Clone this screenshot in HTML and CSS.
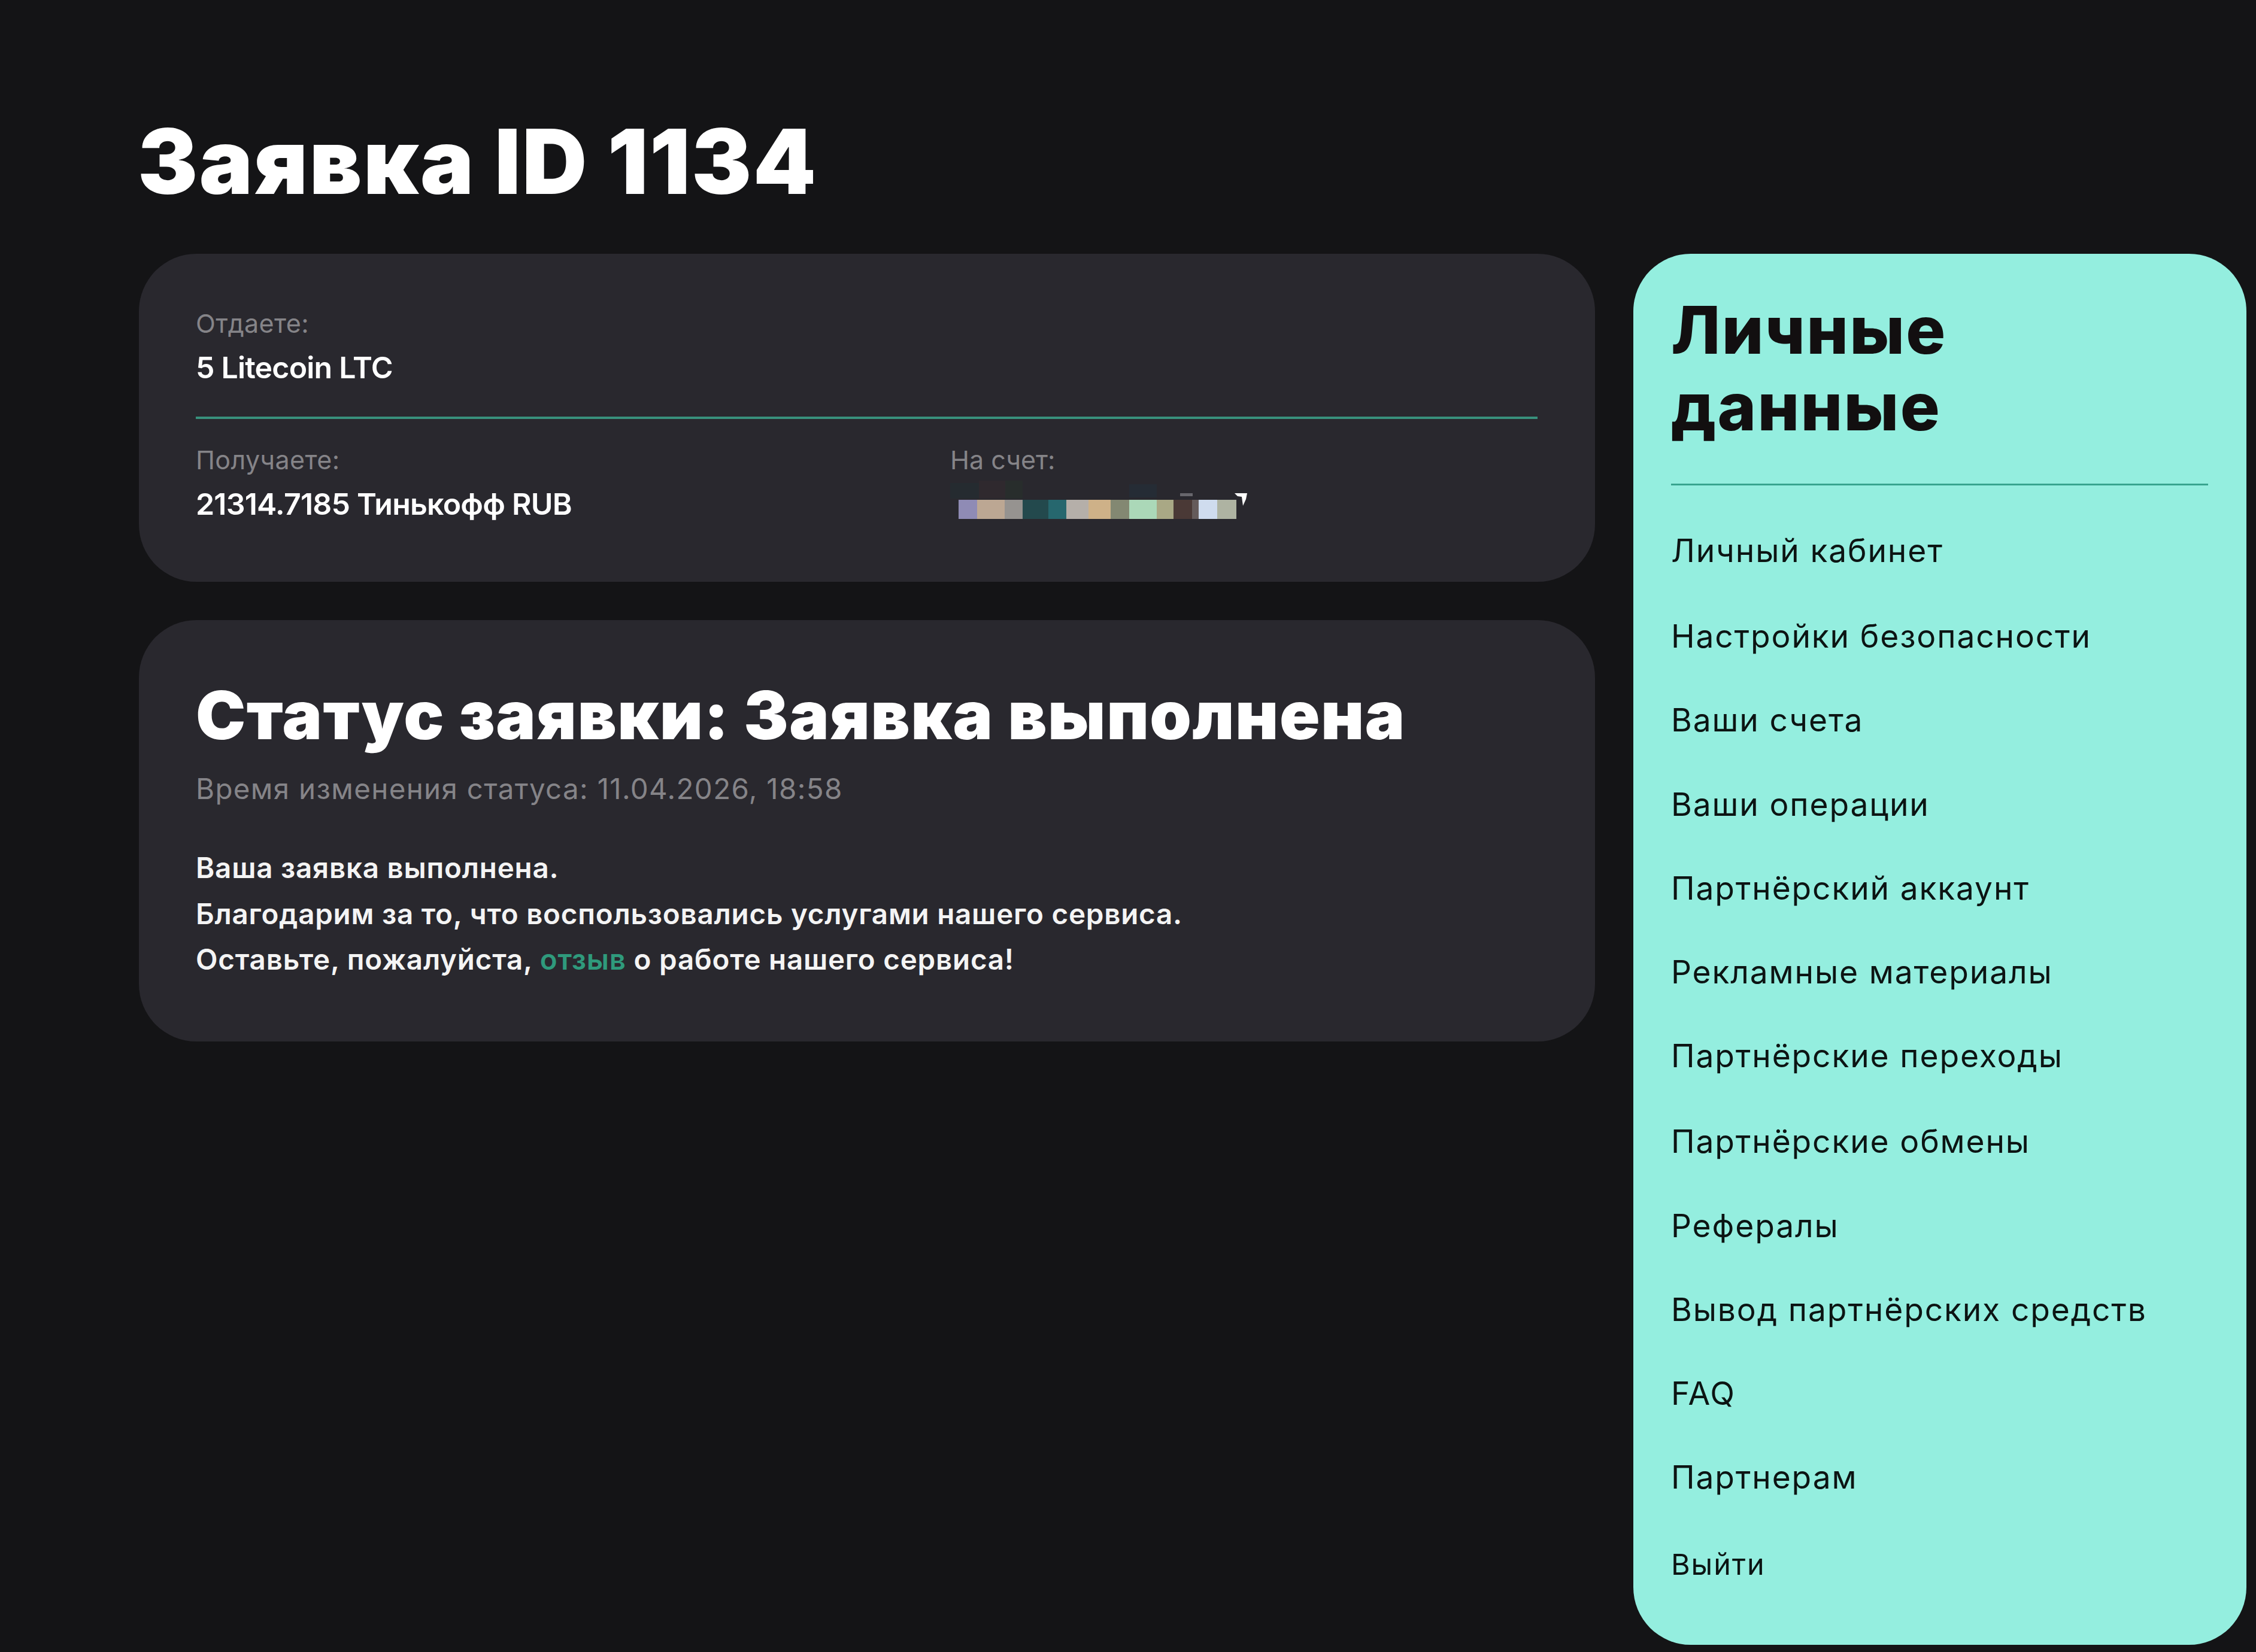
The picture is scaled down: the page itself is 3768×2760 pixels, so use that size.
FILE: index.html
```html
<!DOCTYPE html>
<html lang="ru">
<head>
    <meta charset="UTF-8">
    <meta name="viewport" content="width=device-width, initial-scale=1.0">
    <title>Заявка ID 1134</title>
    <link rel="stylesheet" href="styles.css">
</head>
<body>
    <div class="page">
        <h1 class="page-title">Заявка ID 1134</h1>
        <div class="layout">
            <div class="content">
                <!-- Exchange details -->
                <div class="card exchange">
                    <div class="exchange-row">
                        <div class="exchange-col">
                            <div class="label">Отдаете:</div>
                            <div class="value">5 Litecoin LTC</div>
                        </div>
                    </div>
                    <div class="exchange-row">
                        <div class="exchange-col">
                            <div class="label">Получаете:</div>
                            <div class="value">21314.7185 Тинькофф RUB</div>
                        </div>
                        <div class="exchange-col">
                            <div class="label account-label">На счет:</div>
                            <!-- Hidden account number -->
                            <svg class="account-mask" width="504" height="76" viewBox="0 0 504 76">
                                <rect x="0" y="4" width="48" height="26" fill="#252b30"/>
                                <rect x="48" y="0" width="44" height="30" fill="#2f292e"/>
                                <rect x="92" y="0" width="29" height="30" fill="#282d2c"/>
                                <rect x="299" y="6" width="46" height="22" fill="#252c35"/>
                                <rect x="14" y="32" width="31" height="32" fill="#8f8bb5"/>
                                <rect x="45" y="32" width="46" height="32" fill="#bca793"/>
                                <rect x="91" y="32" width="30" height="32" fill="#969390"/>
                                <rect x="121" y="32" width="43" height="32" fill="#23494d"/>
                                <rect x="164" y="32" width="30" height="32" fill="#26676e"/>
                                <rect x="194" y="32" width="37" height="32" fill="#b5afa9"/>
                                <rect x="231" y="32" width="37" height="32" fill="#ceb188"/>
                                <rect x="268" y="32" width="31" height="32" fill="#838872"/>
                                <rect x="299" y="32" width="46" height="32" fill="#abd8b8"/>
                                <rect x="345" y="32" width="28" height="32" fill="#a9a885"/>
                                <rect x="373" y="32" width="31" height="32" fill="#4a3936"/>
                                <rect x="404" y="32" width="11" height="32" fill="#655b5b"/>
                                <rect x="415" y="32" width="31" height="32" fill="#cfdcee"/>
                                <rect x="446" y="32" width="32" height="32" fill="#aeb3a2"/>
                                <rect x="384" y="21" width="21" height="5" fill="#67666c"/>
                                <polygon points="475,21 496,21 494,31 489,42 487,27 480,26" fill="#fff"/>
                            </svg>
                        </div>
                    </div>
                </div>

                <!-- Status -->
                <div class="card status">
                    <h2 class="status-title">Статус заявки: Заявка выполнена</h2>
                    <div class="status-time">Время изменения статуса: 11.04.2026, 18:58</div>
                    <div class="status-text">
                        Ваша заявка выполнена.<br>
                        Благодарим за то, что воспользовались услугами нашего сервиса.<br>
                        Оставьте, пожалуйста, <a href="#">отзыв</a> о работе нашего сервиса!
                    </div>
                </div>
            </div>

            <div class="sidebar">
                <div class="sidebar-title">Личные<br>данные</div>
                <ul class="menu">
                    <li><a href="#">Личный кабинет</a></li>
                    <li><a href="#">Настройки безопасности</a></li>
                    <li><a href="#">Ваши счета</a></li>
                    <li><a href="#">Ваши операции</a></li>
                    <li><a href="#">Партнёрский аккаунт</a></li>
                    <li><a href="#">Рекламные материалы</a></li>
                    <li><a href="#">Партнёрские переходы</a></li>
                    <li><a href="#">Партнёрские обмены</a></li>
                    <li><a href="#">Рефералы</a></li>
                    <li><a href="#">Вывод партнёрских средств</a></li>
                    <li><a href="#">FAQ</a></li>
                    <li><a href="#">Партнерам</a></li>
                    <li class="logout"><a href="#">Выйти</a></li>
                </ul>
            </div>
        </div>
    </div>
</body>
</html>
```
FILE: styles.css
```css
* {
    box-sizing: border-box;
}

body {
    margin: 0;
    background-color: #141416;
    font-family: Inter, Roboto, sans-serif;
    color: #fff;
    overflow: hidden;
}

a {
    color: inherit;
    text-decoration: none;
}

.page {
    padding: 190px 16px 12px 232px;
}

.page-title {
    margin: 0 0 74px -2px;
    font-size: 150px;
    line-height: 160px;
    font-weight: 900;
    letter-spacing: 0.0155em;
}

.layout {
    display: flex;
    gap: 64px;
}

.content {
    width: 2432px;
}

.card {
    background-color: #29282e;
    border-radius: 96px;
    margin-bottom: 64px;
}

/* Exchange */
.exchange {
    height: 548px;
    padding: 84px 96px 0 95px;
}

.exchange-row {
    display: grid;
    grid-template-columns: 1260px 1fr;
}

.exchange-row + .exchange-row {
    margin-top: 46px;
    padding-top: 36px;
    border-top: 4px solid #38917c;
}

.label {
    font-size: 43px;
    line-height: 64px;
    margin-bottom: 6px;
    color: #858488;
    letter-spacing: 0.009em;
}

.account-label {
    letter-spacing: 0;
}

.value {
    font-size: 50px;
    line-height: 72px;
    font-weight: 600;
    letter-spacing: -0.016em;
}

.account-mask {
    display: block;
    margin-top: -3px;
}

/* Status */
.status {
    height: 704px;
    padding: 91px 90px 0 95px;
}

.status-title {
    margin: 0;
    font-size: 111.5px;
    line-height: 136px;
    font-weight: 900;
    letter-spacing: 0.013em;
    white-space: nowrap;
}

.status-time {
    margin-top: 23px;
    font-size: 47.5px;
    line-height: 64px;
    color: #858488;
    letter-spacing: 0.028em;
}

.status-text {
    margin-top: 62px;
    font-size: 47.5px;
    line-height: 76.5px;
    font-weight: 600;
    letter-spacing: 0.0165em;
    color: #f4f4f4;
}

.status-text a {
    color: #2f9a7c;
}

/* Sidebar */
.sidebar {
    width: 1024px;
    height: 2324px;
    padding: 63px 64px 0 63px;
    background-color: #94eedf;
    border-radius: 96px;
    color: #0c1413;
}

.sidebar-title {
    padding-bottom: 65px;
    border-bottom: 3px solid #38a48f;
    font-size: 110px;
    line-height: 128px;
    font-weight: 800;
    letter-spacing: 0.02em;
    color: #120f10;
}

.menu {
    list-style: none;
    margin: 39px 0 0;
    padding: 0;
    font-size: 53.3px;
    line-height: 140.2px;
    letter-spacing: 0.035em;
}

.menu li:nth-child(1),
.menu li:nth-child(7) {
    margin-bottom: 3px;
}

.menu .logout {
    margin-top: 6px;
    font-size: 48.5px;
}
```
